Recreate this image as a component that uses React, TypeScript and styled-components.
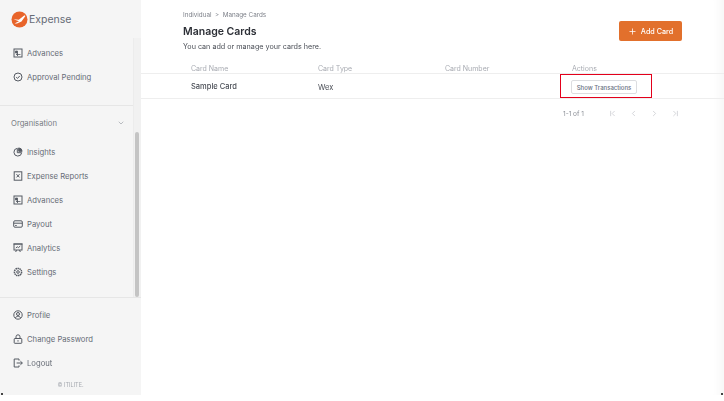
import React from "react";
import styled, { createGlobalStyle } from "styled-components";
import {
  ChevronDown,
  ChevronLeft,
  ChevronRight,
  ChevronFirst,
  ChevronLast,
  Plus,
} from "lucide-react";

const GlobalStyle = createGlobalStyle`
  html, body {
    margin: 0;
    padding: 0;
    background: #fff;
    font-family: Inter, "Liberation Sans", sans-serif;
  }
`;

const Page = styled.div`
  position: relative;
  width: 724px;
  height: 395px;
  display: flex;
  overflow: hidden;
  filter: blur(0.35px); /* the shot is a soft, scaled down capture */

  /* little dark specks in the corners of the shot */
  &::before,
  &::after {
    content: "";
    position: absolute;
    bottom: 0;
    width: 2px;
    height: 2px;
    background: #444;
  }
  &::before {
    left: 1px;
  }
  &::after {
    right: 1px;
  }
`;

const Sidebar = styled.aside`
  width: 141px;
  flex: none;
  background: #f5f5f5;
  display: flex;
  flex-direction: column;
`;

const Brand = styled.div`
  height: 38px;
  display: flex;
  align-items: center;
  gap: 1px;
  padding-left: 11px;
  font-size: 10.5px;
  color: #666b75;
`;

const ScrollArea = styled.div`
  height: 259px;
  display: flex;
  border-bottom: 1px solid #e6e6e6;
`;

const ScrollBody = styled.div`
  flex: 1;
  display: flex;
  flex-direction: column;
`;

const ScrollTrack = styled.div`
  width: 7px;
  flex: none;
  background: #f1f1f1;
  border-left: 1px solid #ececec;
  display: flex;
  flex-direction: column;
  justify-content: flex-end;
`;

const ScrollThumb = styled.div`
  width: 4px;
  height: 165px;
  margin-left: 1px;
  background: #c4c4c4;
  border-radius: 2px;
`;

const NavItem = styled.div`
  height: 24px;
  display: flex;
  align-items: center;
  gap: 4px;
  padding-left: 13px;
  font-size: 7.7px;
  color: #666b75;

  svg {
    flex: none;
    color: #555a63;
  }
`;

const GroupHead = styled.div`
  height: 34px;
  margin-top: 16px;
  border-top: 1px solid #e6e6e6;
  display: flex;
  align-items: center;
  justify-content: space-between;
  padding: 0 8px 0 11px;
  font-size: 7.7px;
  color: #777b84;
`;

const NavList = styled.div`
  display: flex;
  flex-direction: column;
`;

const TopList = styled(NavList)`
  margin-top: 3px;
`;

const BottomList = styled(NavList)`
  padding-top: 5px;
`;

const Copyright = styled.div`
  margin-top: 7px;
  text-align: center;
  font-size: 5.5px;
  color: #a4a8af;
`;

const Main = styled.main`
  flex: 1;
  min-width: 0;
  display: flex;
  flex-direction: column;
  padding-top: 11px;
  box-shadow: inset -12px 0 10px -8px rgba(0, 0, 0, 0.04);
`;

const Header = styled.header`
  height: 52px;
  display: flex;
  justify-content: space-between;
  padding: 0 42px;
`;

const Crumbs = styled.div`
  font-size: 6.3px;
  line-height: 8px;
  color: #7d8089;
`;

const Title = styled.h1`
  margin: 6px 0 0;
  font-size: 10.5px;
  line-height: 14px;
  font-weight: 600;
  color: #2c2f36;
`;

const Subtitle = styled.p`
  margin: 3px 0 0;
  font-size: 7.2px;
  line-height: 9px;
  color: #4a4e56;
`;

const AddButton = styled.button`
  width: 63px;
  height: 20px;
  margin-top: 10px;
  border: none;
  border-radius: 2px;
  background: #e2702c;
  color: #fff;
  font: 500 7.2px Inter, sans-serif;
  display: flex;
  align-items: center;
  justify-content: center;
  gap: 4px;
  padding: 0;
`;

const TableRow = styled.div<{ $head?: boolean }>`
  display: grid;
  grid-template-columns: 127px 127px 127px 1fr;
  padding-left: 50px;
  padding-top: ${(p) => (p.$head ? "1px" : "0")};
  align-items: center;
  height: ${(p) => (p.$head ? "9px" : "24px")};
  font-size: ${(p) => (p.$head ? "7px" : "7.5px")};
  color: ${(p) => (p.$head ? "#a8abb2" : "#4a4e56")};
  border-bottom: 1px solid #eeeeee;
`;

const NameCell = styled.div`
  font-weight: 500;
  padding-top: 1px;
`;

const TypeCell = styled.div`
  padding-top: 3px;
`;

const ActionCell = styled.div`
  position: relative;
  display: flex;
  align-items: center;
  padding-top: 2px;
`;

const ActionButton = styled.button`
  width: 66px;
  height: 14px;
  margin-left: -1px;
  border: 1px solid #dcdde0;
  border-radius: 2px;
  background: #fff;
  color: #6a7080;
  font: 500 6px Inter, sans-serif;
  padding: 0;
`;

// the red box drawn over the shot
const Highlight = styled.div`
  position: absolute;
  left: -12px;
  top: -4px;
  width: 92px;
  height: 24px;
  border: 1px solid #e3001b;
  box-sizing: border-box;
`;

const Pager = styled.div`
  display: flex;
  align-items: center;
  padding-left: 422px;
  margin-top: 10px;
  font-size: 6.5px;
  color: #8a8e96;
`;

const PagerIcons = styled.div`
  display: flex;
  gap: 12px;
  margin-left: 24px;
  color: #c8cacf;
`;

const Logo = () => (
  <svg width="17" height="17" viewBox="0 0 17 17">
    <circle cx="8.5" cy="8.5" r="8" fill="#e8642a" />
    <path d="M2.5 8.2 L7.8 8.8 L13.5 4.2 L14.4 5 L10.5 10.6 L6 12.4 L3.5 12.6 L8 10.2 Z" fill="#fff" />
  </svg>
);

type IconProps = { children: React.ReactNode };

const NavIcon = ({ children }: IconProps) => (
  <svg width="10" height="10" viewBox="0 0 10 10" fill="none" stroke="currentColor" strokeWidth="1">
    {children}
  </svg>
);

const AdvancesIcon = () => (
  <NavIcon>
    <rect x="1" y="1" width="8" height="8" />
    <path d="M2.5 3h2v2h-2z M7.5 6.5H3.5 M5 5l-1.5 1.5L5 8" fill="currentColor" strokeWidth="0.8" />
  </NavIcon>
);

const PendingIcon = () => (
  <NavIcon>
    <circle cx="5" cy="5" r="4" />
    <path d="M3.2 5.2l1.3 1.2 2.3-2.5" />
  </NavIcon>
);

const InsightsIcon = () => (
  <NavIcon>
    <path d="M4.3 1.3a3.9 3.9 0 1 0 4.4 4.4H4.3z" />
    <path d="M5.7 0.9a3.6 3.6 0 0 1 3.4 3.4H5.7z" fill="currentColor" />
  </NavIcon>
);

const ReportsIcon = () => (
  <NavIcon>
    <rect x="1.2" y="0.8" width="7.6" height="8.4" />
    <path d="M3.5 3.2l3 3.2 M6.5 3.2l-3 3.2" />
  </NavIcon>
);

const PayoutIcon = () => (
  <NavIcon>
    <rect x="0.7" y="1.8" width="8.6" height="6.4" rx="1.2" />
    <path d="M0.7 4.2h8.6 M2.2 6.5h1.5" />
  </NavIcon>
);

const AnalyticsIcon = () => (
  <NavIcon>
    <rect x="1" y="1" width="8" height="6" />
    <path d="M0.5 1h9 M2.8 5l1.5-1.2 1.2 0.8 1.8-1.6 M3.5 7l-0.8 2 M6.5 7l0.8 2" />
  </NavIcon>
);

const SettingsIcon = () => (
  <NavIcon>
    <circle cx="5" cy="5" r="3.6" strokeWidth="1.5" strokeDasharray="1.5 0.5" />
    <circle cx="5" cy="5" r="1.3" />
  </NavIcon>
);

const ProfileIcon = () => (
  <NavIcon>
    <circle cx="5" cy="5" r="4.2" />
    <circle cx="5" cy="4" r="1.5" />
    <path d="M2.4 8c0.6-1.3 1.5-1.7 2.6-1.7S7 6.7 7.6 8" />
  </NavIcon>
);

const PasswordIcon = () => (
  <NavIcon>
    <rect x="1.2" y="4.5" width="7.6" height="4.8" rx="0.6" />
    <path d="M3 4.5V2.8a2 2 0 0 1 4 0V4.5 M5 6.2v1.4" />
  </NavIcon>
);

const LogoutIcon = () => (
  <NavIcon>
    <path d="M6 2.6V1H1.2v8H6V7.4 M3.6 5h5.6 M7.4 3.2L9.4 5 7.4 6.8" />
  </NavIcon>
);

const topItems = [
  { icon: AdvancesIcon, label: "Advances" },
  { icon: PendingIcon, label: "Approval Pending" },
];

const orgItems = [
  { icon: InsightsIcon, label: "Insights" },
  { icon: ReportsIcon, label: "Expense Reports" },
  { icon: AdvancesIcon, label: "Advances" },
  { icon: PayoutIcon, label: "Payout" },
  { icon: AnalyticsIcon, label: "Analytics" },
  { icon: SettingsIcon, label: "Settings" },
];

const bottomItems = [
  { icon: ProfileIcon, label: "Profile" },
  { icon: PasswordIcon, label: "Change Password" },
  { icon: LogoutIcon, label: "Logout" },
];

const renderItems = (items: typeof topItems) =>
  items.map((item) => (
    <NavItem key={item.label}>
      <item.icon />
      {item.label}
    </NavItem>
  ));

const App: React.FC = () => {
  return (
    <Page>
      <GlobalStyle />
      <Sidebar>
        <Brand>
          <Logo />
          Expense
        </Brand>
        <ScrollArea>
          <ScrollBody>
            <TopList>{renderItems(topItems)}</TopList>
            <GroupHead>
              Organisation
              <ChevronDown size={8} color="#9a9ea6" />
            </GroupHead>
            <NavList>{renderItems(orgItems)}</NavList>
          </ScrollBody>
          <ScrollTrack>
            <ScrollThumb />
          </ScrollTrack>
        </ScrollArea>
        <BottomList>{renderItems(bottomItems)}</BottomList>
        <Copyright>© ITILITE.</Copyright>
      </Sidebar>
      <Main>
        <Header>
          <div>
            <Crumbs>Individual &nbsp;&gt;&nbsp; Manage Cards</Crumbs>
            <Title>Manage Cards</Title>
            <Subtitle>You can add or manage your cards here.</Subtitle>
          </div>
          <AddButton>
            <Plus size={9} strokeWidth={2} />
            Add Card
          </AddButton>
        </Header>
        <TableRow $head>
          <div>Card Name</div>
          <div>Card Type</div>
          <div>Card Number</div>
          <div>Actions</div>
        </TableRow>
        <TableRow>
          <NameCell>Sample Card</NameCell>
          <TypeCell>Wex</TypeCell>
          <div />
          <ActionCell>
            <ActionButton>Show Transactions</ActionButton>
            <Highlight />
          </ActionCell>
        </TableRow>
        <Pager>
          1-1 of 1
          <PagerIcons>
            <ChevronFirst size={9} />
            <ChevronLeft size={9} />
            <ChevronRight size={9} />
            <ChevronLast size={9} />
          </PagerIcons>
        </Pager>
      </Main>
    </Page>
  );
};

export default App;
